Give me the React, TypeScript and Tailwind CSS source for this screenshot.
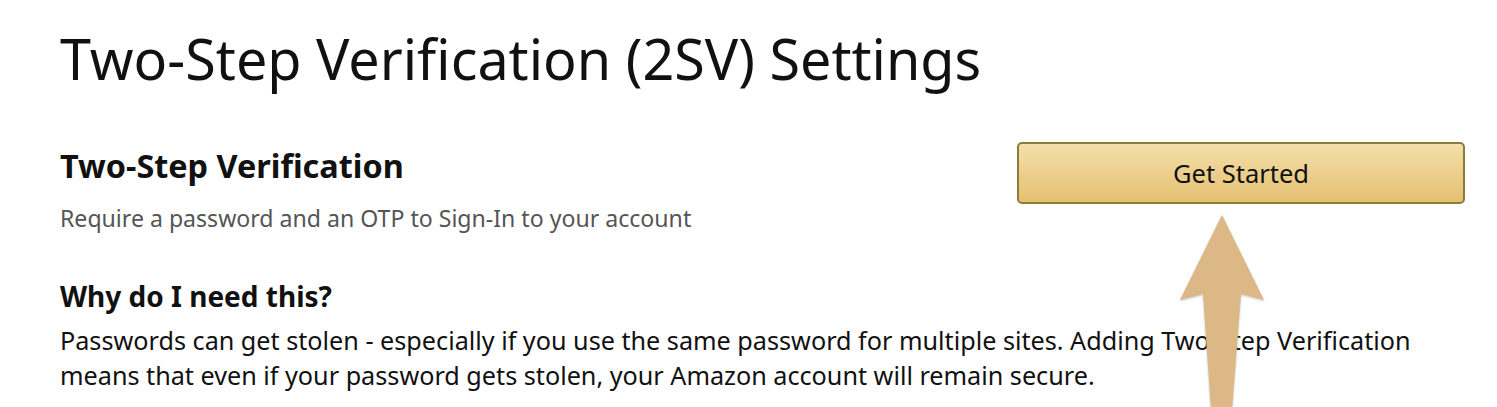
export default function App() {
  return (
    <div
      className="relative bg-white w-[1497px] h-[407px] overflow-hidden text-[#111]"
      style={{ fontFamily: '"Noto Sans", "Open Sans", sans-serif' }}
    >
      <div className="pl-[60px] pt-[18px]">
        <h1 className="text-[55.7px] leading-[80px] font-normal">Two-Step Verification (2SV) Settings</h1>
        <div className="flex mt-[47px] pr-[33px]">
          <div className="flex-1">
            <h2 className="text-[32.4px] leading-[40px] font-bold">Two-Step Verification</h2>
            <p className="text-[23.1px] leading-[32px] text-[#555] mt-[17px]">
              Require a password and an OTP to Sign-In to your account
            </p>
            <h3 className="text-[28px] leading-[36px] font-bold mt-[44px]">Why do I need this?</h3>
            <p className="text-[25.2px] leading-[35px] mt-[9px] whitespace-nowrap">
              Passwords can get stolen - especially if you use the same password for multiple sites. Adding Two-Step Verification
              <br />
              means that even if your password gets stolen, your Amazon account will remain secure.
            </p>
          </div>
        </div>
      </div>
      <button className="absolute left-[1017px] top-[142px] w-[448px] h-[62px] rounded-[5px] border-2 border-[#8f7a3e] bg-gradient-to-b from-[#f4dfaa] to-[#e5c070] text-[25.5px] text-[#111]">
        Get Started
      </button>
      <svg className="absolute left-0 top-0" width="1497" height="407" viewBox="0 0 1497 407">
        <defs>
          <filter id="sh" x="-20%" y="-20%" width="140%" height="140%">
            <feDropShadow dx="0" dy="1" stdDeviation="1" floodColor="#888" floodOpacity="0.5" />
          </filter>
        </defs>
        <path
          d="M1222 215 L1264 300 L1241 294 L1232 410 L1211 410 L1203 294 L1180 300 Z"
          fill="#dcb886"
          filter="url(#sh)"
        />
      </svg>
    </div>
  );
}
